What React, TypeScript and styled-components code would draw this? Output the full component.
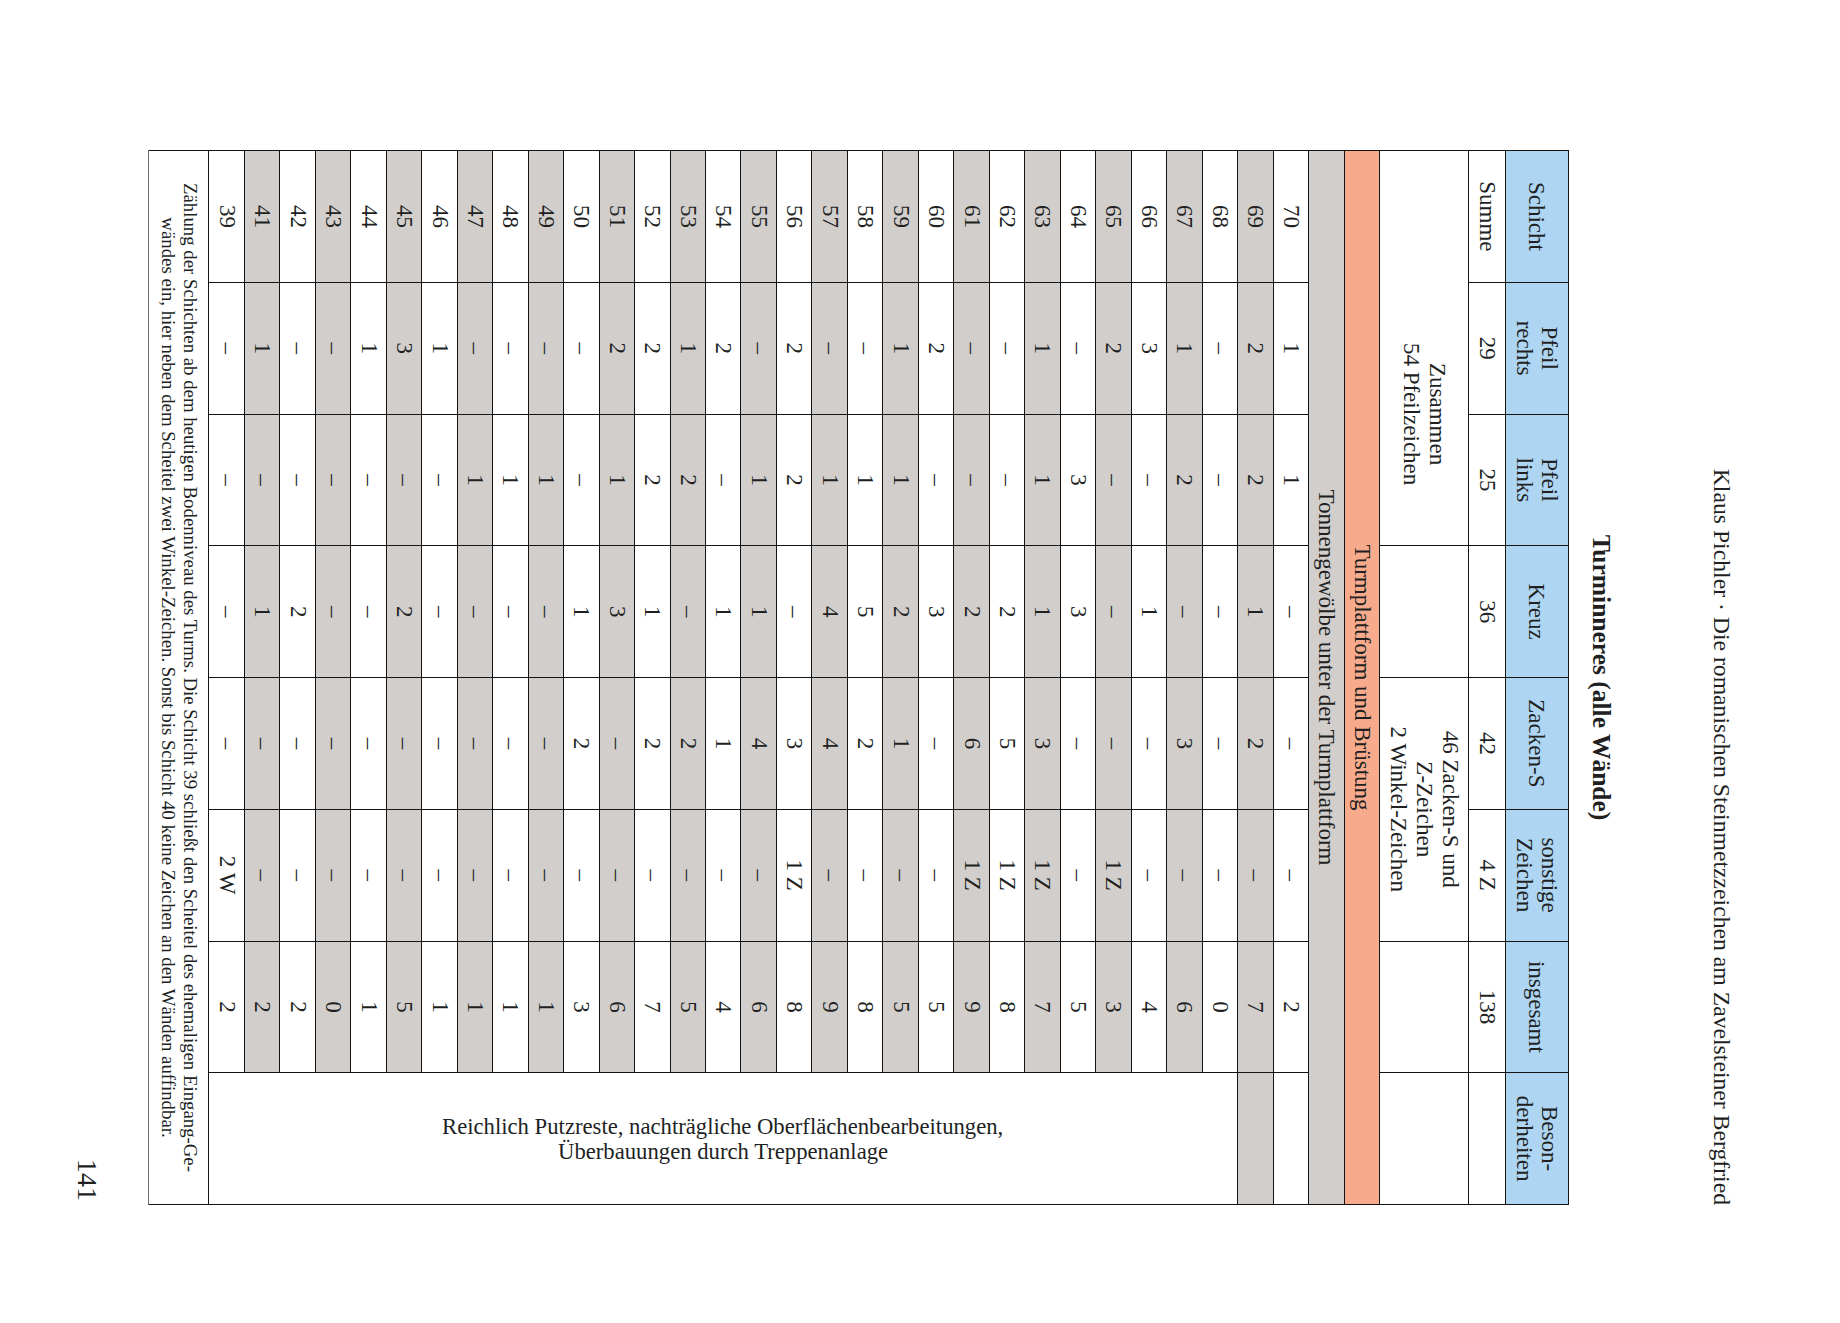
import React from 'react';
import styled, { createGlobalStyle } from 'styled-components';

const GlobalStyle = createGlobalStyle`
  html, body { margin: 0; padding: 0; background: #ffffff; }
  body {
    font-family: "Liberation Serif", "Times New Roman", serif;
    color: #211f1f;
  }
`;

type Tone = 'white' | 'gray' | 'blue' | 'orange';
const tones: Record<Tone, string> = {
  white: '#ffffff',
  gray: '#d2cecb',
  blue: '#aed5f1',
  orange: '#f7ab8c',
};

const Viewport = styled.div`
  width: 1840px;
  height: 1323px;
  overflow: hidden;
  background: #ffffff;
`;

/* The printed page is set sideways: build it upright and turn it a quarter clockwise. */
const Page = styled.div`
  width: 1323px;
  height: 1840px;
  box-sizing: border-box;
  padding: 0 118px 0 150px;
  display: flex;
  flex-direction: column;
  transform-origin: 0 0;
  transform: translateX(1840px) rotate(90deg);
`;

const RunningHead = styled.div`
  margin-top: 105px;
  font-size: 23.7px;
  line-height: 27px;
  text-align: right;
  white-space: nowrap;
`;

const Title = styled.h1`
  margin: 92px 0 0;
  font-size: 25.5px;
  line-height: 30px;
  font-weight: 700;
  text-align: center;
`;

const Table = styled.table`
  margin-top: 17px;
  width: 1055px;
  table-layout: fixed;
  border-collapse: collapse;
  border-top: 1.5px solid #6f7478;
  border-bottom: 1.5px solid #707070;
  border-left: 1px solid #141414;
  border-right: 1px solid #141414;
  font-size: 23px;
`;

const Col = styled.col`
  width: 12.5%;
`;

const Row = styled.tr<{ $h: number }>`
  height: ${(p) => p.$h}px;
`;

const Cell = styled.td<{ $tone?: Tone; $indent?: number }>`
  background: ${(p) => tones[p.$tone ?? 'white']};
  border: 1px solid #141414;
  padding: 0 0 0 ${(p) => p.$indent ?? 0}px;
  text-align: center;
  vertical-align: middle;
  line-height: 26px;
  white-space: nowrap;
`;

const HeadCell = styled.th`
  background: ${tones.blue};
  border: 1px solid #141414;
  padding: 0;
  font-weight: 400;
  text-align: center;
  vertical-align: middle;
  line-height: 25px;
  white-space: nowrap;
`;

const Band = styled.td<{ $tone: Tone }>`
  background: ${(p) => tones[p.$tone]};
  border: 1px solid #141414;
  padding: 0;
  text-align: center;
  vertical-align: middle;
  line-height: 26px;
  white-space: nowrap;
`;

const NoteCell = styled.td`
  background: #ffffff;
  border: 1px solid #141414;
  padding: 0;
  vertical-align: middle;
`;

const SideNote = styled.div`
  writing-mode: vertical-rl;
  transform: rotate(180deg);
  height: 980px;
  margin: 0 auto;
  font-size: 22.7px;
  line-height: 25px;
  text-align: center;
  white-space: nowrap;
`;

const Footnote = styled.td`
  background: #ffffff;
  border: 1px solid #141414;
  border-bottom: 1.5px solid #707070;
  padding: 0;
  font-size: 18.8px;
  line-height: 22px;
  text-align: center;
  vertical-align: middle;
  white-space: nowrap;
`;

const PageNumber = styled.div`
  margin-top: 45px;
  font-size: 28px;
  line-height: 32px;
  text-align: right;
  padding-right: 4px;
`;

const headers: React.ReactNode[] = [
  'Schicht',
  <>Pfeil<br />rechts</>,
  <>Pfeil<br />links</>,
  'Kreuz',
  'Zacken-S',
  <>sonstige<br />Zeichen</>,
  'insgesamt',
  <>Beson-<br />derheiten</>,
];

const D = '–';
const rows: string[][] = [
  ['70', '1', '1', D, D, D, '2'],
  ['69', '2', '2', '1', '2', D, '7'],
  ['68', D, D, D, D, D, '0'],
  ['67', '1', '2', D, '3', D, '6'],
  ['66', '3', D, '1', D, D, '4'],
  ['65', '2', D, D, D, '1 Z', '3'],
  ['64', D, '3', '3', D, D, '5'],
  ['63', '1', '1', '1', '3', '1 Z', '7'],
  ['62', D, D, '2', '5', '1 Z', '8'],
  ['61', D, D, '2', '6', '1 Z', '9'],
  ['60', '2', D, '3', D, D, '5'],
  ['59', '1', '1', '2', '1', D, '5'],
  ['58', D, '1', '5', '2', D, '8'],
  ['57', D, '1', '4', '4', D, '9'],
  ['56', '2', '2', D, '3', '1 Z', '8'],
  ['55', D, '1', '1', '4', D, '6'],
  ['54', '2', D, '1', '1', D, '4'],
  ['53', '1', '2', D, '2', D, '5'],
  ['52', '2', '2', '1', '2', D, '7'],
  ['51', '2', '1', '3', D, D, '6'],
  ['50', D, D, '1', '2', D, '3'],
  ['49', D, '1', D, D, D, '1'],
  ['48', D, '1', D, D, D, '1'],
  ['47', D, '1', D, D, D, '1'],
  ['46', '1', D, D, D, D, '1'],
  ['45', '3', D, '2', D, D, '5'],
  ['44', '1', D, D, D, D, '1'],
  ['43', D, D, D, D, D, '0'],
  ['42', D, D, '2', D, D, '2'],
  ['41', '1', D, '1', D, D, '2'],
  ['39', D, D, D, D, '2 W', '2'],
];

export default function App() {
  return (
    <Viewport>
      <GlobalStyle />
      <Page>
        <RunningHead>
          Klaus Pichler · Die romanischen Steinmetzzeichen am Zavelsteiner Bergfried
        </RunningHead>
        <Title>Turminneres (alle Wände)</Title>
        <Table>
          <colgroup>
            {headers.map((_, i) => (
              <Col key={i} />
            ))}
          </colgroup>
          <thead>
            <Row $h={63}>
              {headers.map((h, i) => (
                <HeadCell key={i}>{h}</HeadCell>
              ))}
            </Row>
          </thead>
          <tbody>
            <Row $h={37}>
              <Cell>Summe</Cell>
              <Cell>29</Cell>
              <Cell>25</Cell>
              <Cell>36</Cell>
              <Cell>42</Cell>
              <Cell>4 Z</Cell>
              <Cell>138</Cell>
              <Cell />
            </Row>
            <Row $h={89}>
              <Cell colSpan={3} $indent={132}>
                Zusammen
                <br />
                54 Pfeilzeichen
              </Cell>
              <Cell />
              <Cell colSpan={2}>
                46 Zacken-S und
                <br />
                Z-Zeichen
                <br />
                2 Winkel-Zeichen
              </Cell>
              <Cell />
              <Cell />
            </Row>
            <Row $h={35}>
              <Band colSpan={8} $tone="orange">
                Turmplattform und Brüstung
              </Band>
            </Row>
            <Row $h={36}>
              <Band colSpan={8} $tone="gray">
                Tonnengewölbe unter der Turmplattform
              </Band>
            </Row>
            {rows.map((r, i) => {
              const tone: Tone = i % 2 === 1 ? 'gray' : 'white';
              return (
                <Row key={r[0]} $h={35.48}>
                  {r.map((v, j) => (
                    <Cell key={j} $tone={tone}>
                      {v}
                    </Cell>
                  ))}
                  {i < 2 && <Cell $tone={tone} />}
                  {i === 2 && (
                    <NoteCell rowSpan={29}>
                      <SideNote>
                        Reichlich Putzreste, nachträgliche Oberflächenbearbeitungen,
                        <br />
                        Überbauungen durch Treppenanlage
                      </SideNote>
                    </NoteCell>
                  )}
                </Row>
              );
            })}
            <Row $h={60}>
              <Footnote colSpan={8}>
                Zählung der Schichten ab dem heutigen Bodenniveau des Turms. Die Schicht 39 schließt den Scheitel des ehemaligen Eingang-Ge-
                <br />
                wändes ein, hier neben dem Scheitel zwei Winkel-Zeichen. Sonst bis Schicht 40 keine Zeichen an den Wänden auffindbar.
              </Footnote>
            </Row>
          </tbody>
        </Table>
        <PageNumber>141</PageNumber>
      </Page>
    </Viewport>
  );
}
